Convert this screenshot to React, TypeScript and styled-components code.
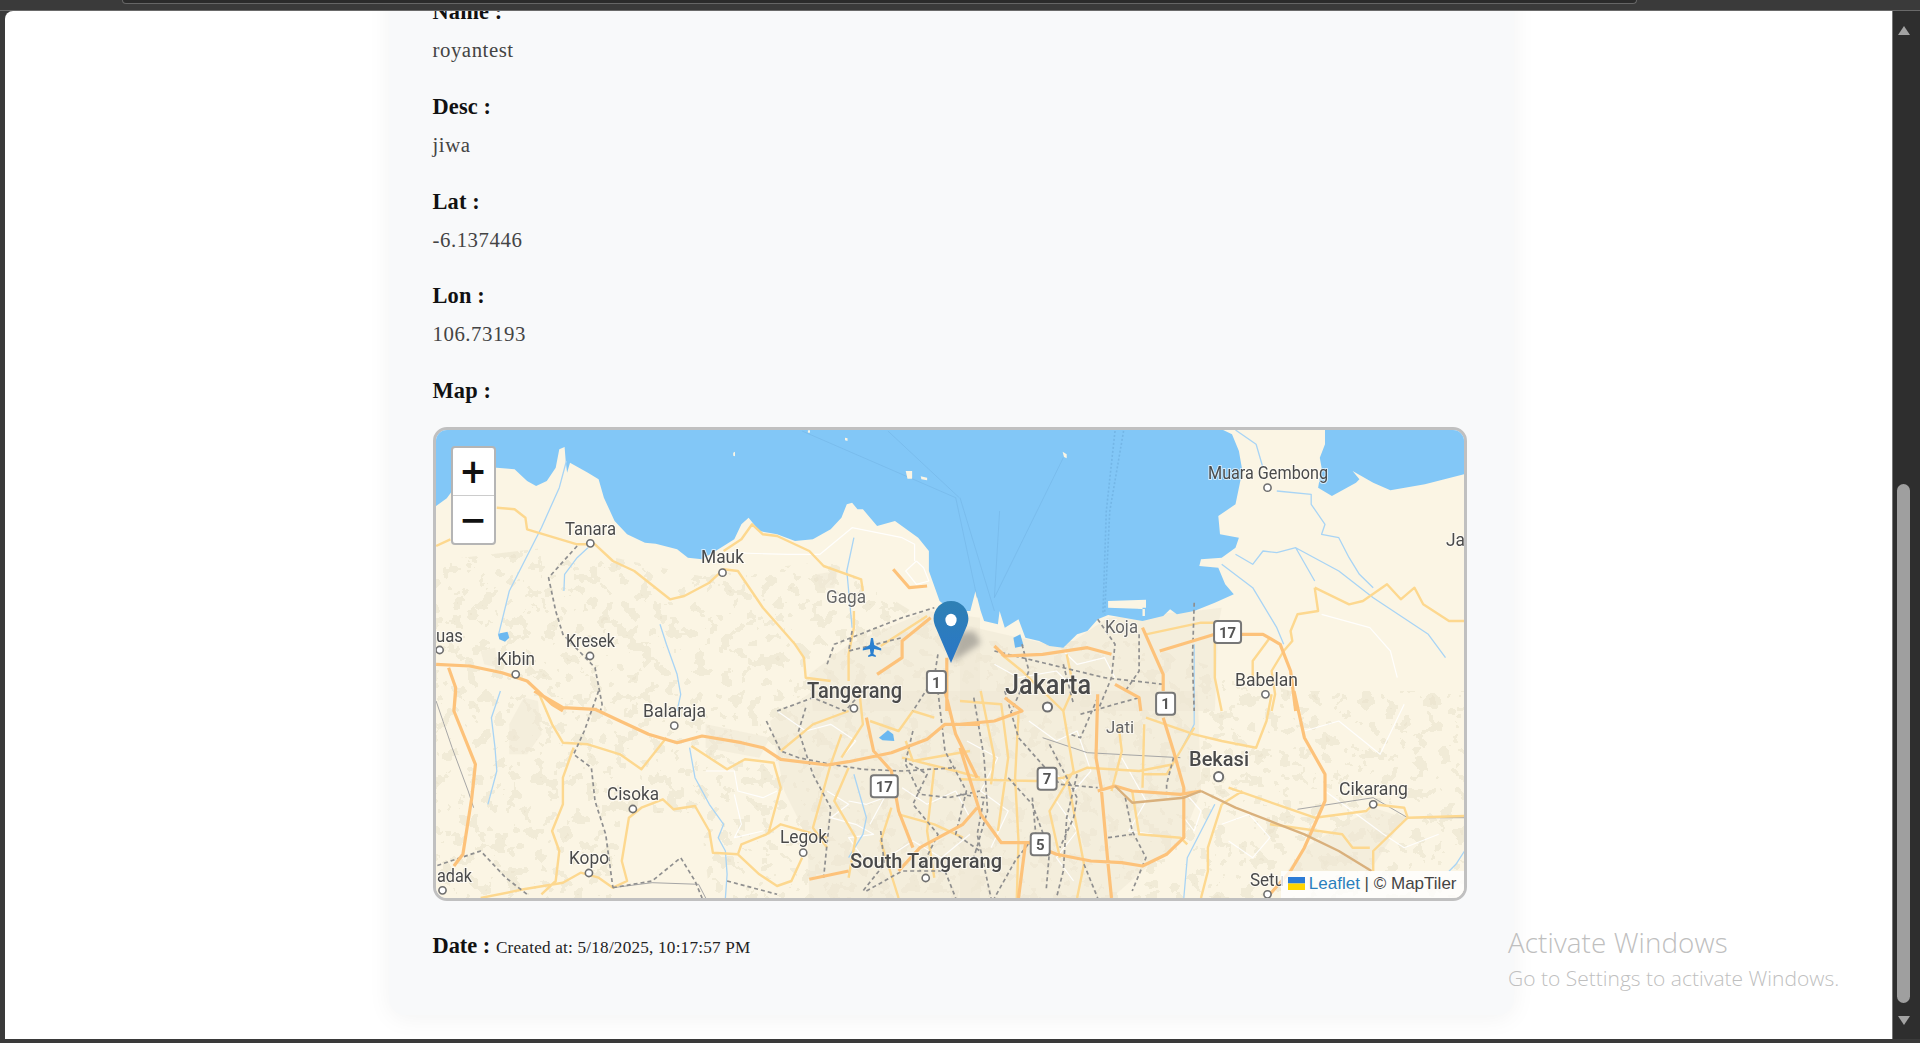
import styled, { createGlobalStyle } from 'styled-components';

const GlobalStyle = createGlobalStyle`
  html, body {
    margin: 0;
    height: 100%;
    overflow: hidden;
    background: #3a3a3a;
  }
`;

const Screen = styled.div`
  display: flex;
  flex-direction: column;
  width: 1920px;
  height: 1043px;
  background-color: #3a3a3a;
`;

const TopBar = styled.div`
  flex: 0 0 11px;
  box-sizing: border-box;
  padding: 0 283px 0 122px;
  border-bottom: 1px solid #6a6a6a;
`;

const TopStrip = styled.div`
  height: 4px;
  box-sizing: border-box;
  background-color: #2b2b2b;
  border: 1px solid #666;
  border-top: none;
  border-radius: 0 0 6px 6px;
`;

const Body = styled.div`
  flex: 1;
  display: flex;
  min-height: 0;
  padding: 0 0 4px 5px;
`;

const Content = styled.div`
  position: relative;
  flex: 1;
  display: flex;
  justify-content: center;
  overflow: hidden;
  padding-left: 5px;
  background-color: #fff;
  border-top-left-radius: 8px;
`;

const Card = styled.div`
  flex: 0 0 1125px;
  box-sizing: border-box;
  height: 1055px;
  margin-top: -51px;
  padding: 39px 45px 57px 44px;
  background-color: #f8f9fa;
  border-radius: 16px;
  box-shadow: 0 4px 24px rgb(0 0 0 / 5%);
  font-family: 'Liberation Serif', 'Times New Roman', serif;
`;

const Field = styled.div`
  margin-bottom: 30.8px;
`;

const Label = styled.div`
  font-size: 22.4px;
  line-height: 26px;
  font-weight: 700;
  letter-spacing: 0.15px;
  color: #111;
`;

const Value = styled.div`
  margin-top: 12px;
  font-size: 20.8px;
  line-height: 26px;
  letter-spacing: 0.55px;
  color: #444;
`;

const MapFrame = styled.div`
  position: relative;
  box-sizing: border-box;
  width: 1034px;
  height: 474px;
  margin: 23px 0 32px 0;
  overflow: hidden;
  border: 3px solid #c0c0c0;
  border-radius: 14px;
`;

const MapSvg = styled.svg`
  display: block;
  width: 100%;
  height: 100%;
  filter: blur(0.4px);
`;

const ZoomControl = styled.div`
  position: absolute;
  top: 16px;
  left: 15px;
  width: 45px;
  box-sizing: border-box;
  overflow: hidden;
  background-color: #fff;
  border: 2px solid rgb(90 90 90 / 45%);
  border-radius: 4px;
`;

const ZoomButton = styled.div<{ $divided?: boolean }>`
  display: flex;
  align-items: center;
  justify-content: center;
  height: 47px;
  font-family: 'DejaVu Sans', sans-serif;
  font-size: 33px;
  font-weight: 700;
  color: #111;
  border-bottom: ${(p) => (p.$divided ? '1px solid #ccc' : 'none')};
`;

const Attribution = styled.div`
  position: absolute;
  right: 0;
  bottom: 0;
  display: flex;
  align-items: center;
  box-sizing: border-box;
  height: 27px;
  padding: 0 7px 2px;
  background-color: rgb(255 255 255 / 80%);
  font-family: 'Liberation Sans', Arial, sans-serif;
  font-size: 17px;
  color: #444;
  white-space: pre;
`;

const AttributionLink = styled.span`
  color: #2a7fbd;
`;

const Flag = styled.svg`
  width: 17px;
  height: 13px;
  margin-right: 4px;
`;

const DateRow = styled.div`
  font-size: 22.4px;
  line-height: 26px;
  font-weight: 700;
  color: #111;
`;

const DateText = styled.span`
  font-size: 17.2px;
  font-weight: 400;
  letter-spacing: 0.2px;
  color: #222;
`;

const ActivateNote = styled.div`
  position: absolute;
  left: 1503px;
  top: 914px;
  font-family: 'Open Sans', 'Noto Sans', sans-serif;
  font-weight: 300;
  color: #bfbfbf;
  pointer-events: none;
`;

const ActivateTitle = styled.div`
  font-size: 27.8px;
  line-height: 34px;
  letter-spacing: 0.1px;
`;

const ActivateHint = styled.div`
  margin-top: 6px;
  font-size: 21px;
  line-height: 26px;
`;

const ScrollBar = styled.div`
  flex: 0 0 27px;
  display: flex;
  flex-direction: column;
  align-items: center;
  box-sizing: border-box;
  padding: 15px 10px 14px 4px;
  background-color: #2e2e2e;
  border-left: 1px solid #777;
`;

const Arrow = styled.div<{ $down?: boolean }>`
  flex: 0 0 auto;
  width: 0;
  height: 0;
  border-left: 6.5px solid transparent;
  border-right: 6.5px solid transparent;
  border-bottom: ${(p) => (p.$down ? 'none' : '9px solid #a3a3a3')};
  border-top: ${(p) => (p.$down ? '9px solid #a3a3a3' : 'none')};
`;

const ScrollTrack = styled.div`
  flex: 1;
  width: 100%;
  display: flex;
  flex-direction: column;
  justify-content: flex-end;
  padding: 0 0 13px;
`;

const ScrollThumb = styled.div`
  width: 13px;
  height: 519px;
  background-color: #9f9f9f;
  border-radius: 7px;
`;

// crop origin and x scale of the four regions the map was traced from
const regions = {
  a: [420, 410, 2.8],
  b: [960, 410, 2.904],
  c: [420, 690, 2.8],
  d: [960, 690, 2.904],
} as const;
type Region = keyof typeof regions;

const at = (r: Region, x: number, y: number): [number, number] => {
  const [ox, oy, sx] = regions[r];
  return [ox + x / sx, oy + y / 3];
};

const trace = (r: Region, s: string) =>
  s
    .trim()
    .split(/\s+/)
    .map((p) => {
      const [x, y] = p.split(',').map(Number);
      return at(r, x, y).map((n) => n.toFixed(1)).join(' ');
    });

const line = (r: Region, s: string) => 'M' + trace(r, s).join('L');

const seaPath =
  'M' +
  [
    ...trace('a', `30,40 30,290 45,285 75,262 90,240 90,175 215,170 265,175 300,210 325,225 355,210 380,170 390,115 405,108 408,150 412,185 420,155 470,185 500,205 515,260 545,330 580,370 630,395 660,398 720,415 750,440 790,445 850,405 880,385 900,340 920,320 950,360 1000,370 1050,390 1100,385 1150,355 1180,320 1195,280 1210,275 1225,295 1240,295 1280,345 1330,330 1395,380 1425,420 1425,480 1455,570 1490,600`),
    ...trace('b', `30,600 45,540 60,600 70,630 110,640 115,600 130,650 170,625 190,680 230,690 260,705 300,710 340,670 370,660 400,625 430,612 530,630 590,615 610,595 630,610 680,600 740,575 795,550 770,520 750,470 695,465 700,445 760,440 800,410 810,380 755,370 750,315 800,280 820,180 810,120 790,70 730,40`),
  ].join('L') +
  'Z';

const seaEastPath = line(
  'b',
  '1060,40 1060,100 1045,140 1050,170 1040,230 1080,255 1150,215 1160,205 1140,180 1200,215 1250,238 1350,220 1480,185 1480,40 1060,40'
);

// land where the built-up texture shows, the plain coast and south stay clean
const mottleZone =
  'M436 560L560 545L700 575L830 560L960 640L1130 640L1290 690L1465 690L1465 897L710 897L700 812L620 812L620 897L436 897Z';

const urbanPatches = [
  line('a', '1100,900 1090,790 1200,700 1420,600 1568,620 1568,900'),
  line('a', '1110,490 1170,480 1160,530 1120,530'),
  line('a', '170,720 210,710 220,770 180,760'),
  line('b', '0,640 300,710 430,620 680,600 760,590 750,640 740,900 0,900'),
  line('c', '980,90 1100,0 1568,0 1568,621 1090,621 1085,440 1020,300'),
  line('c', '250,100 290,20 330,30 340,130 300,190 250,190'),
  line('c', '800,100 980,140 950,200 800,170'),
  line('d', '0,0 690,0 700,300 640,460 540,530 440,621 0,621'),
  line('d', '1000,470 1200,350 1290,380 1190,541 950,541'),
];

const water = [
  line('a', '218,668 245,662 250,680 238,692 222,685'),
  line('c', '1285,140 1310,118 1325,130 1328,150 1295,148'),
  line('b', '155,680 175,670 185,705 160,710'),
];

const islands = [
  line('a', '1360,180 1378,180 1378,203 1365,203'),
  line('a', '1402,196 1420,200 1420,208 1404,205'),
  line('a', '877,125 882,122 882,136 877,134'),
  line('a', '1190,80 1197,82 1197,90 1190,88'),
  line('a', '1086,58 1092,58 1092,65 1086,65'),
  line('b', '298,122 310,130 310,142 302,138'),
  line('b', '430,570 540,566 540,590 530,590 530,615 537,615 537,594 430,590'),
];

type RouteGroup = { color: string; width: number; dash?: string; opacity?: number; lines: string[] };

const routeGroups: RouteGroup[] = [
  {
    color: '#ffffff',
    width: 1.2,
    opacity: 0.9,
    lines: [
      line('a', '850,425 1030,430 1120,430 1210,350 1350,380 1385,400 1385,450'),
      line('a', '1390,450 1360,480 1390,520 1425,510 1410,470 1390,450'),
      line('c', '800,240 880,240 890,300 960,320 1000,300'),
      line('c', '880,310 900,400 880,440 960,420'),
      line('c', '1140,300 1200,340 1150,380 1220,400 1270,430 1200,440 1240,500'),
      line('c', '1200,330 1250,340 1300,320 1260,400'),
      line('c', '1000,60 1080,120 1150,100 1220,150 1180,200'),
      line('c', '1350,290 1420,340 1500,300 1540,380'),
      line('c', '1280,520 1380,450 1460,500 1540,430'),
      line('d', '1000,120 1100,90 1220,190 1290,40'),
      line('d', '760,400 840,370 900,440 850,500 780,450'),
      line('d', '1060,300 1230,430 1290,470 1390,430'),
      line('d', '650,300 700,360 680,420 650,380'),
      line('d', '200,90 280,150 340,120 380,240 330,300 280,250'),
      line('d', '470,200 540,330 490,420 560,430'),
      line('d', '20,150 110,200 60,300 140,360 90,470'),
      line('d', '280,330 340,420 280,500 330,570'),
      line('b', '1050,610 1190,650 1250,720 1270,800'),
      line('b', '300,720 340,760 420,740 450,800'),
      line('b', '100,760 170,800 280,780 330,830'),
    ],
  },
  {
    color: '#a8d4f5',
    width: 1.3,
    lines: [
      line('a', '410,150 390,230 340,350 250,540 220,670'),
      line('a', '470,410 440,440 405,490 403,540'),
      line('a', '672,640 690,700 720,790 730,850 720,900'),
      line('a', '1215,380 1195,480 1210,650'),
      line('b', '800,57 860,100 880,170'),
      line('b', '920,240 1020,250 1020,280 1060,340 1050,370 1100,380 1130,440 1160,490 1200,530'),
      line('b', '800,430 850,460 880,420 920,425 975,410 1030,510'),
      line('b', '975,410 1100,480 1200,560 1360,670 1410,740'),
      line('b', '760,460 850,530 920,650 940,700'),
      line('b', '680,700 680,900'),
      line('c', '225,0 200,80 210,170 215,240 190,340'),
      line('c', '755,170 770,260 810,340 850,400 835,440 855,480 860,550 855,621'),
      line('c', '1215,250 1250,380 1240,430 1200,500'),
      line('d', '680,0 680,100 640,180'),
      line('d', '740,340 710,400 660,500 650,621'),
      line('d', '1465,480 1440,520 1420,541'),
    ],
  },
  {
    color: '#a6a6a6',
    width: 1,
    lines: [
      line('c', '45,30 90,170 135,300 150,350'),
      line('d', '240,140 370,185 640,200'),
      line('d', '500,335 650,320'),
      line('d', '980,355 1200,320 1300,380 1465,380'),
      line('c', '540,590 650,575 780,580 800,621'),
    ],
  },
  {
    color: '#fdd88f',
    width: 2.4,
    lines: [
      line('a', '45,405 85,385'),
      line('a', '215,290 265,295 295,320 300,355 440,400 490,400 540,450 600,480 700,565 740,555 810,515 850,475 890,480 960,590 1050,700 1075,740 1080,800 1150,810'),
      line('a', '850,420 900,385 930,340 960,370 1000,375 1090,420 1130,465 1235,505 1240,540'),
      line('a', '1215,600 1215,650 1200,730 1200,810'),
      line('a', '1290,705 1420,615'),
      line('b', '1030,530 1040,600 980,610 960,660 965,690 940,720 905,780 915,850 905,900'),
      line('b', '1030,530 1130,580 1170,570 1240,520 1280,565 1320,530 1345,580 1420,630 1465,630'),
      line('b', '540,670 700,635 740,635'),
      line('b', '740,690 740,800 760,900'),
      line('b', '850,800 850,750 900,680'),
      line('b', '120,730 180,780 300,900'),
      line('b', '310,730 330,830 300,900'),
      line('c', '330,0 370,100 400,155 470,160 560,190 620,235 690,140'),
      line('c', '430,170 400,260 400,340 370,420 390,480 380,570 340,610'),
      line('c', '170,621 290,595 400,575 450,545 500,560 540,590 580,570 565,510 585,380 620,350 680,325 710,355 770,345 810,420 820,485 890,490 950,550 1000,585 1040,570 1070,500'),
      line('c', '890,490 900,460 970,430 1010,400 1140,440'),
      line('c', '760,165 860,235 910,205 990,215 1010,290 975,430'),
      line('c', '1180,130 1150,220 1100,410 1140,470'),
      line('c', '1200,230 1160,330 1220,440 1200,560'),
      line('c', '1260,90 1340,120 1380,60 1440,80'),
      line('c', '1350,200 1500,240 1568,260'),
      line('c', '1340,370 1440,400 1520,440'),
      line('c', '1010,180 1100,100 1200,60'),
      line('c', '1230,0 1240,100 1180,200'),
      line('c', '1360,150 1380,210 1540,180'),
      line('c', '1440,230 1420,420 1440,560'),
      line('c', '1320,350 1290,450 1340,621'),
      line('d', '0,30 120,40 140,200 110,420'),
      line('d', '60,0 100,200 90,280'),
      line('d', '0,265 220,270 300,260 370,230 520,240 620,220'),
      line('d', '540,80 680,130 760,150 860,170 890,90 905,10'),
      line('d', '680,110 640,180 600,250 530,250'),
      line('d', '500,300 520,430 640,440 660,460'),
      line('d', '760,340 720,470 720,541 700,621'),
      line('d', '780,290 1030,380 1180,360 1200,340'),
      line('d', '1200,340 1290,350 1300,380 1200,480 1200,541'),
      line('d', '900,400 1110,430 1140,470 1190,470'),
      line('d', '1300,380 1465,375'),
      line('d', '310,250 360,520 340,621'),
      line('d', '820,300 760,340'),
      line('d', '535,100 530,290'),
      line('d', '300,60 330,240 260,360 290,500'),
      line('d', '170,70 160,260 170,450 165,621'),
      line('d', '460,100 470,180 440,300'),
    ],
  },
  {
    color: '#8f8f8f',
    width: 1.7,
    dash: '4 3',
    lines: [
      line('a', '440,405 360,500 380,600 400,670 490,770 510,880 505,900'),
      line('a', '1140,760 1160,700 1350,620 1440,590'),
      line('a', '1450,730 1440,800 1380,900'),
      line('a', '1210,660 1200,720 1350,680'),
      line('b', '400,625 450,700 440,800 400,900'),
      line('b', '680,575 675,750 680,900'),
      line('b', '520,670 520,780 480,840'),
      line('b', '100,720 300,770 420,800 590,820'),
      line('b', '180,700 200,780 150,900'),
      line('b', '300,760 330,880'),
      line('c', '500,0 460,120 430,190 480,230 490,330 520,430 540,590'),
      line('c', '30,530 170,480 240,560 300,610'),
      line('c', '540,590 650,570 730,500 770,570 790,621'),
      line('c', '860,570 1000,610'),
      line('c', '970,90 1010,180 1060,200 1150,220 1240,235 1350,240 1500,230'),
      line('c', '1080,50 1060,120 1100,250 1150,350 1130,560'),
      line('c', '1360,220 1400,310 1480,320 1568,300'),
      line('c', '1290,420 1300,520 1240,600'),
      line('c', '1450,0 1470,180 1530,300 1500,430 1568,480'),
      line('c', '1380,120 1360,210 1420,250 1380,340 1450,430 1400,540'),
      line('c', '1000,60 1100,20 1190,60 1240,0'),
      line('c', '1250,600 1350,540 1470,540 1500,621'),
      line('d', '130,0 170,140 230,210 290,280 400,290'),
      line('d', '40,20 70,200 80,360 40,500'),
      line('d', '340,250 310,380 300,540 280,621'),
      line('d', '400,20 350,140 320,130'),
      line('d', '350,70 450,40 520,20'),
      line('d', '480,320 500,420 540,500 500,600'),
      line('d', '620,200 600,280 600,310'),
      line('d', '140,260 210,340 260,480 250,600'),
      line('d', '210,320 220,430 160,510 100,621'),
      line('d', '260,160 340,320 330,380 290,470'),
      line('d', '430,440 500,430'),
      line('d', '0,310 70,320 50,430 90,621'),
      line('d', '360,520 400,621'),
    ],
  },
  {
    color: '#fdc27a',
    width: 3.2,
    lines: [
      line('a', '45,760 140,765 230,785 300,810 370,880 400,900'),
      line('a', '80,770 100,830 95,900'),
      line('a', '1325,475 1370,530 1420,525'),
      line('a', '1280,790 1350,740 1350,690 1430,620'),
      line('a', '1475,740 1475,900'),
      line('b', '100,705 130,735 240,730 370,710 440,730'),
      line('b', '530,650 590,790 590,840'),
      line('b', '580,720 740,670 880,670 930,700 960,780 975,900'),
      line('b', '450,820 520,860 525,900'),
      line('c', '100,0 95,60 155,220 145,320 120,490 95,525'),
      line('c', '320,0 400,50 490,55 560,90 640,130 720,155 790,135 900,155 960,170 1010,205 1140,222 1200,212 1320,185 1420,145 1470,100 1568,100'),
      line('c', '1090,565 1200,540'),
      line('c', '1250,80 1270,180 1320,240 1340,360 1380,470'),
      line('c', '1470,0 1500,130 1560,260'),
      line('c', '1560,350 1520,400 1400,470 1340,540'),
      line('d', '0,100 100,90 180,60 130,20'),
      line('d', '970,0 1000,140 1060,250 1060,330 1000,470 960,540 890,621'),
      line('d', '590,80 620,180 650,290 650,440 600,490 530,525 470,515 380,510 280,490 200,455 120,455 60,370 0,170'),
      line('d', '400,10 395,200 410,290 430,520 440,621'),
      line('d', '400,300 450,285 500,300 640,310 700,300'),
      line('d', '190,460 170,621'),
    ],
  },
  {
    color: '#d9b07c',
    width: 2.4,
    lines: [
      line('d', '700,300 800,350 1000,430 1100,480 1195,540'),
      line('d', '450,285 500,335 650,320 700,300'),
    ],
  },
];

type PlaceLabel = { text: string; x1: number; x2: number; y: number; size: number; weight?: number; color?: string };

const placeLabels: PlaceLabel[] = [
  { text: 'Tanara', x1: 565, x2: 616, y: 534, size: 18 },
  { text: 'Mauk', x1: 701, x2: 744, y: 562, size: 18 },
  { text: 'Gaga', x1: 826, x2: 866, y: 602, size: 18, color: '#666' },
  { text: 'uas', x1: 436, x2: 463, y: 641, size: 18 },
  { text: 'Kibin', x1: 497, x2: 535, y: 664, size: 19 },
  { text: 'Kresek', x1: 566, x2: 615, y: 646, size: 18 },
  { text: 'Tangerang', x1: 807, x2: 902, y: 697, size: 22, weight: 500 },
  { text: 'Balaraja', x1: 643, x2: 706, y: 716, size: 18 },
  { text: 'Cisoka', x1: 607, x2: 659, y: 799, size: 18 },
  { text: 'Kopo', x1: 569, x2: 609, y: 863, size: 18 },
  { text: 'Legok', x1: 780, x2: 827, y: 842, size: 18 },
  { text: 'adak', x1: 437, x2: 472, y: 881, size: 18 },
  { text: 'South Tangerang', x1: 850, x2: 1002, y: 867, size: 21, weight: 500 },
  { text: 'Jakarta', x1: 1005, x2: 1091, y: 693, size: 27, weight: 500 },
  { text: 'Jati', x1: 1106, x2: 1134, y: 732, size: 17, color: '#666' },
  { text: 'Bekasi', x1: 1189, x2: 1249, y: 765, size: 21, weight: 500 },
  { text: 'Cikarang', x1: 1339, x2: 1408, y: 794, size: 18 },
  { text: 'Setu', x1: 1250, x2: 1284, y: 885, size: 18 },
  { text: 'Babelan', x1: 1235, x2: 1298, y: 685, size: 18 },
  { text: 'Koja', x1: 1105, x2: 1138, y: 632, size: 18, color: '#666' },
  { text: 'Muara Gembong', x1: 1208, x2: 1328, y: 478, size: 18 },
  { text: 'Ja', x1: 1446, x2: 1465, y: 545, size: 18 },
];

const towns: { r: Region; x: number; y: number; big?: boolean }[] = [
  { r: 'a', x: 477, y: 397 },
  { r: 'a', x: 847, y: 485 },
  { r: 'a', x: 55, y: 717 },
  { r: 'a', x: 268, y: 790 },
  { r: 'a', x: 476, y: 735 },
  { r: 'c', x: 1215, y: 52 },
  { r: 'c', x: 712, y: 104 },
  { r: 'c', x: 596, y: 354 },
  { r: 'c', x: 473, y: 546 },
  { r: 'c', x: 1073, y: 485 },
  { r: 'c', x: 63, y: 598 },
  { r: 'c', x: 1416, y: 561 },
  { r: 'd', x: 254, y: 48, big: true },
  { r: 'd', x: 751, y: 257, big: true },
  { r: 'd', x: 1200, y: 340 },
  { r: 'd', x: 893, y: 610 },
  { r: 'b', x: 887, y: 850 },
  { r: 'b', x: 893, y: 230 },
];

const shields: { r: Region; x: number; y: number; text: string }[] = [
  { r: 'a', x: 1446, y: 813, text: '1' },
  { r: 'c', x: 1300, y: 286, text: '17' },
  { r: 'b', x: 777, y: 663, text: '17' },
  { r: 'd', x: 597, y: 38, text: '1' },
  { r: 'd', x: 253, y: 263, text: '7' },
  { r: 'd', x: 233, y: 460, text: '5' },
];

const fields = [
  { label: 'Name :', value: 'royantest' },
  { label: 'Desc :', value: 'jiwa' },
  { label: 'Lat :', value: '-6.137446' },
  { label: 'Lon :', value: '106.73193' },
];

const MapArt = () => (
  <MapSvg viewBox="436 429 1028 468" preserveAspectRatio="none">
    <defs>
      <linearGradient id="pin" x1="0" y1="0" x2="0" y2="1">
        <stop offset="0" stopColor="#2e80b4" />
        <stop offset="1" stopColor="#2a77c8" />
      </linearGradient>
      <filter id="pinShadow" x="-30%" y="-30%" width="160%" height="160%">
        <feGaussianBlur stdDeviation="3" />
      </filter>
      <filter id="mottle" filterUnits="userSpaceOnUse" x="436" y="429" width="1028" height="468" colorInterpolationFilters="sRGB">
        <feTurbulence type="fractalNoise" baseFrequency="0.075" numOctaves="3" seed="7" />
        <feColorMatrix values="0 0 0 0 0.93  0 0 0 0 0.9  0 0 0 0 0.82  1 0 0 0 0" />
        <feComponentTransfer>
          <feFuncA type="discrete" tableValues="0 0 0 0.7 1" />
        </feComponentTransfer>
        <feComposite operator="in" in2="SourceAlpha" />
      </filter>
    </defs>
    <rect x="436" y="429" width="1028" height="468" fill="#fbf5e4" />
    <path d={mottleZone} fill="#000" filter="url(#mottle)" />
    {urbanPatches.map((d, i) => (
      <path key={i} d={d + 'Z'} fill="#efe8d6" opacity="0.55" />
    ))}
    <path d={seaPath} fill="#82c7f7" />
    <path d={seaEastPath + 'Z'} fill="#82c7f7" />
    <path d={line('a', '1070,60 1500,260 1560,560') + line('a', '1310,60 1510,260')} fill="none" stroke="#74b6e6" strokeWidth="0.6" />
    <path d={line('b', '0,260 100,600') + line('b', '300,140 100,560') + line('b', '115,300 100,560')} fill="none" stroke="#74b6e6" strokeWidth="0.6" />
    <path d={line('b', '450,60 425,300 415,610') + line('b', '475,60 435,300 420,610')} fill="none" stroke="#74b6e6" strokeWidth="1.6" strokeDasharray="2 2" />
    {islands.map((d, i) => (
      <path key={i} d={d + 'Z'} fill="#fbf5e4" />
    ))}
    {water.map((d, i) => (
      <path key={i} d={d + 'Z'} fill="#6cb8f0" />
    ))}
    {routeGroups.map((g) => (
      <path
        key={g.color}
        d={g.lines.join('')}
        fill="none"
        stroke={g.color}
        strokeWidth={g.width}
        strokeDasharray={g.dash}
        opacity={g.opacity}
        strokeLinejoin="round"
      />
    ))}
    <path
      d="M871 637l2 0 1.2 7 7 3.5 0 2-7-1.6-.8 5 2.4 1.6 0 1.4-3.8-.9-3.8.9 0-1.4 2.4-1.6-.8-5-7 1.6 0-2 7-3.5z"
      fill="#2b80d0"
    />
    {towns.map((t, i) => {
      const [x, y] = at(t.r, t.x, t.y);
      return <circle key={i} cx={x} cy={y} r={t.big ? 4.6 : 3.6} fill="#fff" stroke="#6f6f6f" strokeWidth={t.big ? 2 : 1.6} />;
    })}
    {shields.map((s, i) => {
      const [x, y] = at(s.r, s.x, s.y);
      const w = s.text.length > 1 ? 27 : 19;
      return (
        <g key={i}>
          <rect x={x - w / 2} y={y - 11} width={w} height={22} rx="3" fill="#fff" stroke="#777" strokeWidth="2" />
          <text x={x} y={y + 5.5} textAnchor="middle" fontFamily="Roboto, sans-serif" fontWeight="700" fontSize="15" fill="#555">
            {s.text}
          </text>
        </g>
      );
    })}
    {placeLabels.map((l) => (
      <text
        key={l.text}
        x={l.x1}
        y={l.y}
        textLength={l.x2 - l.x1}
        lengthAdjust="spacingAndGlyphs"
        fontFamily="Roboto, sans-serif"
        fontSize={l.size}
        fontWeight={l.weight ?? 400}
        fill={l.color ?? '#4a4a4a'}
        stroke="#fff"
        strokeOpacity="0.65"
        strokeWidth="2"
        paintOrder="stroke"
      >
        {l.text}
      </text>
    ))}
    <path d="M951 662l30-20-7-12-16 2z" fill="#555" opacity="0.4" filter="url(#pinShadow)" />
    <path
      d="M951 600c-9.6 0-17.4 7.8-17.4 17.4 0 3.4 1 6.4 2.4 9.6L951 662l15-35c1.4-3.2 2.4-6.2 2.4-9.6 0-9.6-7.8-17.4-17.4-17.4z"
      fill="url(#pin)"
    />
    <ellipse cx="951" cy="619" rx="5.6" ry="6.2" fill="#fff" />
  </MapSvg>
);

const App = () => {
  return (
    <Screen>
      <GlobalStyle />
      <TopBar>
        <TopStrip />
      </TopBar>
      <Body>
        <Content>
          <Card>
            {fields.map((f) => (
              <Field key={f.label}>
                <Label>{f.label}</Label>
                <Value>{f.value}</Value>
              </Field>
            ))}
            <Label>Map :</Label>
            <MapFrame>
              <MapArt />
              <ZoomControl>
                <ZoomButton $divided>+</ZoomButton>
                <ZoomButton>−</ZoomButton>
              </ZoomControl>
              <Attribution>
                <Flag viewBox="0 0 17 13">
                  <rect width="17" height="6.5" fill="#2c7bd6" />
                  <rect y="6.5" width="17" height="6.5" fill="#ffd500" />
                </Flag>
                <AttributionLink>Leaflet</AttributionLink>
                {' | © MapTiler'}
              </Attribution>
            </MapFrame>
            <DateRow>
              Date : <DateText>Created at: 5/18/2025, 10:17:57 PM</DateText>
            </DateRow>
          </Card>
          <ActivateNote>
            <ActivateTitle>Activate Windows</ActivateTitle>
            <ActivateHint>Go to Settings to activate Windows.</ActivateHint>
          </ActivateNote>
        </Content>
        <ScrollBar>
          <Arrow />
          <ScrollTrack>
            <ScrollThumb />
          </ScrollTrack>
          <Arrow $down />
        </ScrollBar>
      </Body>
    </Screen>
  );
};

export default App;
